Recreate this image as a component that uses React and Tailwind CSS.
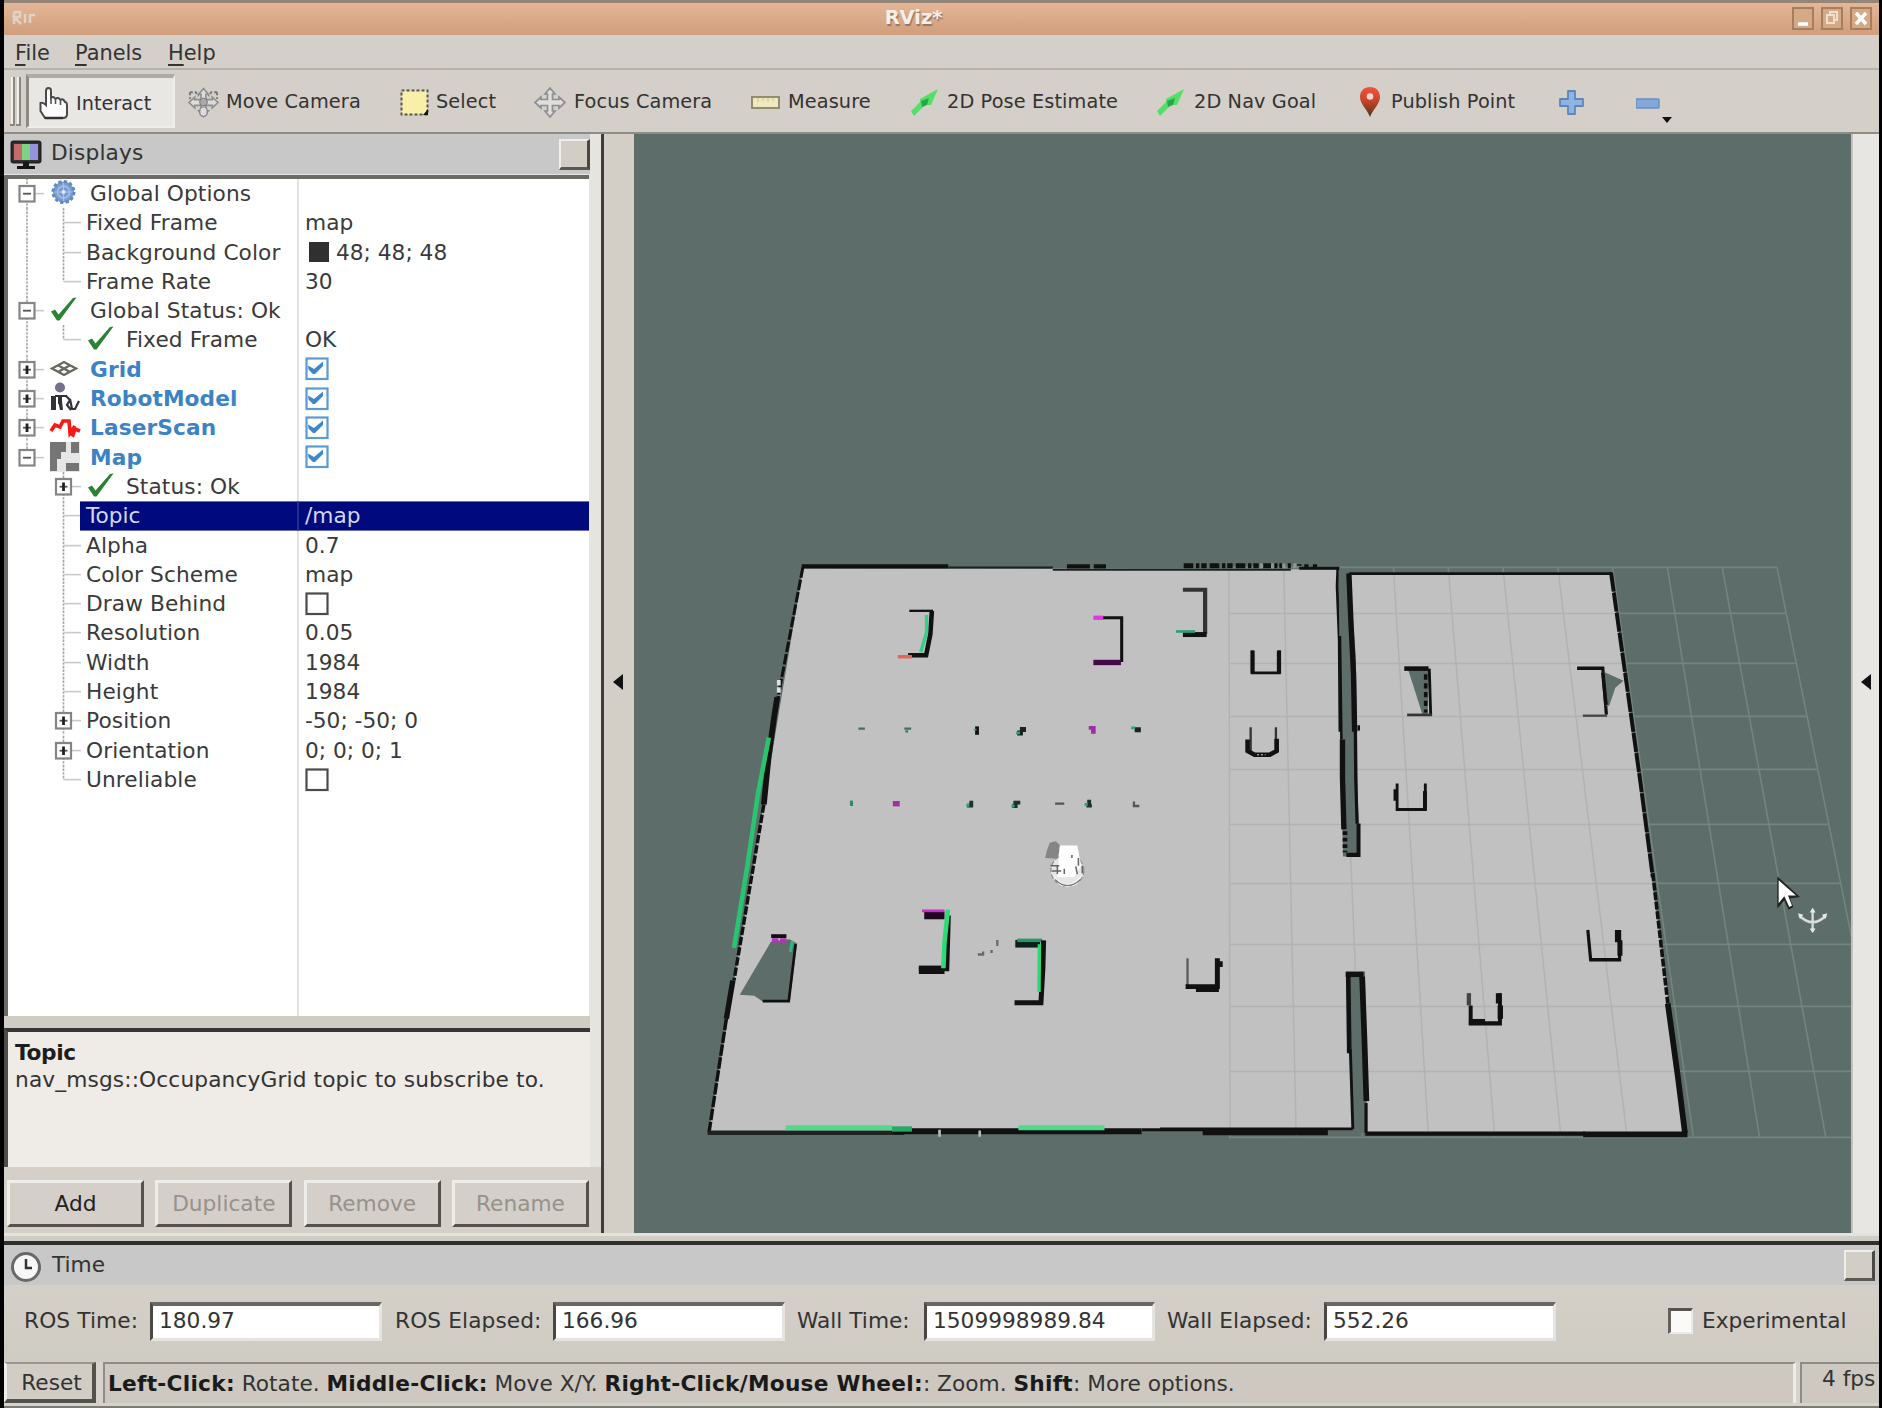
import React from "react";

const ROWS = [
  { level: 0, box: "-", icon: "gear", name: "Global Options", first: true },
  { level: 1, name: "Fixed Frame", value: "map" },
  { level: 1, name: "Background Color", value: "48; 48; 48", swatch: true },
  { level: 1, name: "Frame Rate", value: "30", last: true },
  { level: 0, box: "-", icon: "check", name: "Global Status: Ok" },
  { level: 1, icon: "check", name: "Fixed Frame", value: "OK", last: true },
  { level: 0, box: "+", icon: "grid", name: "Grid", bold: true, checked: true },
  { level: 0, box: "+", icon: "robot", name: "RobotModel", bold: true, checked: true },
  { level: 0, box: "+", icon: "laser", name: "LaserScan", bold: true, checked: true },
  { level: 0, box: "-", icon: "map", name: "Map", bold: true, checked: true, last: true },
  { level: 1, box: "+", icon: "check", name: "Status: Ok", end: true },
  { level: 1, name: "Topic", value: "/map", selected: true, end: true },
  { level: 1, name: "Alpha", value: "0.7", end: true },
  { level: 1, name: "Color Scheme", value: "map", end: true },
  { level: 1, name: "Draw Behind", unchecked: true, end: true },
  { level: 1, name: "Resolution", value: "0.05", end: true },
  { level: 1, name: "Width", value: "1984", end: true },
  { level: 1, name: "Height", value: "1984", end: true },
  { level: 1, box: "+", name: "Position", value: "-50; -50; 0", end: true },
  { level: 1, box: "+", name: "Orientation", value: "0; 0; 0; 1", end: true },
  { level: 1, name: "Unreliable", unchecked: true, end: true, last: true },
];

function RowIcon({ kind, x }) {
  return (
    <g transform={`translate(${x} 0)`}>
      {kind === "gear" && (
        <g>
          <circle cx="12.5" cy="13" r="10.5" fill="#7a9cce" stroke="#6288bd" strokeWidth="3" strokeDasharray="3.2 2.3" />
          <circle cx="12.5" cy="13" r="6" fill="none" stroke="#a9c3e8" strokeWidth="1.3" />
          <path d="M12.5 4V22M3.500 13H21.500" stroke="#a9c3e8" strokeWidth="1.200" />
          <circle cx="12.500" cy="13" r="2" fill="#dce8f8" />
        </g>
      )}
      {kind === "check" && (
        <path d="M0 15.500 L4 13.500 L7.500 18.500 L22 2 L25.500 1.500 L8.500 24.500 L6 24.500 Z" fill="#2b8232" />
      )}
      {kind === "grid" && (
        <g fill="none" stroke="#6a6660" strokeWidth="2.300">
          <path d="M1 13.500 L13 7 L25 13.500 L13 20 Z M7 10.200 L19 17 M19 10.200 L7 17" />
        </g>
      )}
      {kind === "robot" && (
        <g>
          <circle cx="9" cy="3.500" r="5" fill="#77708a" />
          <path d="M0 12h5v14h-5zM7 11h4v9h-4zM7 17h4l1 9h-3z" fill="#33303c" />
          <path d="M4 12h12M15 12l4 4-3 5 4 5M19 15l2 10h3l4-8" fill="none" stroke="#34313b" strokeWidth="2.200" />
        </g>
      )}
      {kind === "laser" && (
        <path d="M0 18 L4 12 L9 14 L12 8 L18 8 L19 20 L24 13 M19 20 L22 22 L24 16 L29 18" fill="none" stroke="#f81818" strokeWidth="3.600" />
      )}
      {kind === "map" && (
        <g>
          <rect x="-1" y="-1" width="30" height="30" fill="#e6e6e6" />
          <path d="M-1 -1H15V9H10V16H6V28H-1ZM20 -1H28V10H20ZM15 20H28V28H15Z" fill="#757575" />
        </g>
      )}
    </g>
  );
}

function Branches({ row }) {
  const cx = row.level ? 55.5 : 19;
  const w = row.level ? (row.icon ? 118 : 78) : 82;
  const dash = { stroke: "#a5a5a5", strokeWidth: 1.6, strokeDasharray: "2.4 1.2" };
  return (
    <svg width={w} height="29.3" className="shrink-0 overflow-visible">
      {!row.end && (
        <path d={`M19 ${row.first ? -1 : 0}V${row.level === 0 && row.last ? 15 : 29.3}`} {...dash} />
      )}
      {row.level === 1 && <path d={`M55.5 0V${row.last ? 15 : 29.3}`} {...dash} />}
      <path d={row.level ? "M56 14.6H73" : "M27 14.6H36"} stroke="#c9c9c9" strokeWidth="1.6" />
      {row.box && (
        <g>
          <rect x={cx - 7.5} y="7" width="15" height="15.500" fill="#fff" stroke="#858585" strokeWidth="2.200" />
          <path d={`M${cx - 4} 14.7H${cx + 4}`} stroke="#555" strokeWidth="1.8" />
          {row.box === "+" && <path d={`M${cx} 10.500V19`} stroke="#222" strokeWidth="2.800" />}
        </g>
      )}
      {row.icon && <RowIcon kind={row.icon} x={row.level ? 80 : 43} />}
    </svg>
  );
}

function CheckBox({ on }) {
  return (
    <svg width="24" height="24" className="shrink-0">
      <rect x="1.500" y="1.500" width="21" height="20.500" fill="#fff" stroke={on ? "#5b9bd5" : "#4b4b4b"} strokeWidth="2.200" />
      {on && <path d="M3 8.500 L9 12 L18 4.500 L18 9 L10 17 L8 17 L3.500 12.500 Z" fill="#3d86cc" />}
    </svg>
  );
}

function TreeRow({ row }) {
  return (
    <div className="flex h-[29.3px] leading-[29.3px] whitespace-nowrap">
      <div className="flex w-[291px] shrink-0 border-r-2 border-[#e4e4e4]">
        <Branches row={row} />
        <span
          className={
            row.selected
              ? "-ml-[6px] grow border-y border-[#6a6fb0] bg-[#000a7c] pl-[6px] leading-[27.3px] text-[#d5d7ee]"
              : row.bold
              ? "font-bold tracking-[0.1px] text-[#3c83c6]"
              : "tracking-[0.1px]"
          }
        >
          {row.name}
        </span>
      </div>
      <div
        className={
          row.selected
            ? "-ml-[2px] flex grow items-center border-y border-l-2 border-y-[#6a6fb0] border-l-[#262c8c] bg-[#000a7c] pl-[6px] text-[#d5d7ee]"
            : "flex grow items-center pl-[6px]"
        }
      >
        {row.swatch && <span className="mr-[7px] ml-1 size-5 bg-[#303030]" />}
        {row.value}
        {row.checked && <CheckBox on />}
        {row.unchecked && <CheckBox />}
      </div>
    </div>
  );
}

function DockButton() {
  return (
    <div className="h-[31px] w-[31px] border-t-2 border-r-3 border-b-3 border-l-2 border-t-[#f0eeea] border-r-[#4b4843] border-b-[#5b5852] border-l-[#f0eeea] bg-[#d2cec6]" />
  );
}

function PanelButton({ label, disabled }) {
  return (
    <div
      className={
        "flex h-[47px] w-[137px] items-center justify-center border-t-[3px] border-r-[3px] border-b-[3px] border-l-[3px] border-t-[#efede9] border-r-[#55524d] border-b-[#55524d] border-l-[#efede9] bg-[#d4cfc8] pt-px " +
        (disabled ? "text-[#96928c]" : "text-[#222]")
      }
    >
      {label}
    </div>
  );
}

function Field({ value, className }) {
  return (
    <div
      className={
        "flex h-[39px] items-center border-t-4 border-r-[3px] border-b-[3px] border-l-[3px] border-t-[#6a6763] border-r-[#e6e4df] border-b-[#e6e4df] border-l-[#4a4744] bg-white pl-[6px] text-[#333] " +
        className
      }
    >
      {value}
    </div>
  );
}

function Cross({ fill = "#dcdcdc" }) {
  return (
    <path
      d="M16 1 L21 7 H18.500 V12.500 H25 V10 L31 15.500 L25 21 V18.500 H18.500 V24 H21 L16 30 L11 24 H13.500 V18.500 H7 V21 L1 15.500 L7 10 V12.500 H13.500 V7 H11 Z"
      fill={fill}
      stroke="#8f8f8f"
      strokeWidth="1.700"
    />
  );
}

function GreenArrow() {
  return (
    <svg width="28" height="27" viewBox="0 0 28 27">
      <path d="M0 22 L9 13 L9 10 L27 0 L20 16 L14 16 L3 27 Z" fill="#54df69" />
      <path d="M10 12 L18 9 L16 16 L11 18 Z" fill="#27a848" />
    </svg>
  );
}

function Tool({ className, iconClass, icon, label }) {
  return (
    <div className={"flex shrink-0 items-center " + className}>
      <span className={"flex shrink-0 items-center pt-[2px] " + iconClass}>{icon}</span>
      <span className="pt-[2px] tracking-[0.12px]">{label}</span>
    </div>
  );
}

function Toolbar() {
  return (
    <div className="flex h-[64px] items-center border-b-2 border-[#8f8c86] bg-[#d4cfc8] text-[19.3px] whitespace-nowrap text-[#333]">
      <svg width="22" height="50" className="mt-[2px] shrink-0">
        <path d="M8 0V48M14 0V48" stroke="#f0eeea" strokeWidth="2" />
        <path d="M10 0V48H6M16 0V48H12" stroke="#8b8882" strokeWidth="2" fill="none" />
      </svg>
      <div className="mr-[2px] flex h-[54px] w-[149px] shrink-0 items-center border-t-4 border-r-2 border-b-2 border-l-[3px] border-t-[#aeaaa4] border-r-[#efedea] border-b-[#efedea] border-l-[#8d8a84] bg-[#e9e7e3] pl-[10px]">
        <svg width="30" height="33" viewBox="0 0 30 33" className="mt-[3px] mr-[7px] shrink-0">
          <path
            d="M7 17 V4 Q7 1 9.500 1 Q12 1 12 4 V11 Q14 8.500 16.500 12 Q19 9.500 21.500 13 Q24 11 26 15 Q28 15 28 19 V27 Q28 31 24 31 H6 L1.500 24 V16 Q4 15 7 18 Z"
            fill="#fbfbfb"
            stroke="#4a4a4a"
            strokeWidth="2"
          />
          <path d="M12 11V17M16.500 12V17M21.500 13V18" stroke="#555" strokeWidth="1.600" />
          <path d="M6 31H24" stroke="#333" strokeWidth="2.500" />
        </svg>
        <span className="pt-[5px]">Interact</span>
      </div>
      <Tool
        className="ml-[11px] w-[212px]"
        iconClass="w-[38px]"
        label="Move Camera"
        icon={
          <svg width="31" height="31" viewBox="0 0 32 31">
            <Cross />
            <path d="M2 5h6l3 4M30 5h-6l-3 4M2 5v7M30 5v7" fill="none" stroke="#777" strokeWidth="2" strokeDasharray="3 2" />
            <circle cx="16" cy="15" r="4" fill="#aaa" stroke="#777" />
            <ellipse cx="16" cy="25" rx="4" ry="5" fill="#ddd" stroke="#888" strokeWidth="1.500" />
          </svg>
        }
      />
      <Tool
        className="w-[134px]"
        iconClass="w-[36px]"
        label="Select"
        icon={
          <svg width="29" height="27">
            <rect x="1.500" y="1.500" width="26" height="24" fill="#f8f0a8" stroke="#555" strokeWidth="2" strokeDasharray="3 2" />
            <path d="M28 20V26H23Z" fill="#111" />
          </svg>
        }
      />
      <Tool className="w-[217px]" iconClass="w-[40px]" label="Focus Camera" icon={<svg width="32" height="31"><Cross fill="#dedede" /></svg>} />
      <Tool
        className="w-[160px]"
        iconClass="w-[37px]"
        label="Measure"
        icon={
          <svg width="29" height="13">
            <rect x="1" y="1" width="27" height="11" fill="#efe8bd" stroke="#918d72" strokeWidth="2" />
            <path d="M7 2v4M12 2v3M17 2v4M22 2v3" stroke="#d3cca0" strokeWidth="1.300" />
          </svg>
        }
      />
      <Tool className="w-[246px]" iconClass="w-[36px]" label="2D Pose Estimate" icon={<GreenArrow />} />
      <Tool className="w-[203px]" iconClass="w-[37px]" label="2D Nav Goal" icon={<GreenArrow />} />
      <Tool
        className="w-[199px]"
        iconClass="w-[31px]"
        label="Publish Point"
        icon={
          <svg width="20" height="30" viewBox="0 0 20 30">
            <defs>
              <linearGradient id="pin" x1="0" y1="0" x2="0" y2="1">
                <stop offset="0" stopColor="#f2553c" />
                <stop offset=".45" stopColor="#c8452c" />
                <stop offset="1" stopColor="#4d3716" />
              </linearGradient>
            </defs>
            <path d="M10 0C4 0 0 4 0 10C0 17 7 22 10 30C13 22 20 17 20 10C20 4 16 0 10 0Z" fill="url(#pin)" />
            <circle cx="10" cy="9.500" r="3.300" fill="#f0d5cd" />
          </svg>
        }
      />
      <svg width="25" height="25" className="mt-[2px] mr-[52px] shrink-0">
        <path d="M9 1H16V9H24V16H16V24H9V16H1V9H9Z" fill="#8fb4e3" stroke="#5f86b8" strokeWidth="1.800" strokeLinejoin="round" />
      </svg>
      <svg width="40" height="40" className="mt-[3px] shrink-0">
        <rect x="0" y="16" width="23" height="9" rx="1" fill="#82a9da" stroke="#6b8fbe" strokeWidth="1.500" />
        <path d="M26 34H36L31 40Z" fill="#111" />
      </svg>
    </div>
  );
}

function Grid() {
  const ys = [567, 613, 663, 716, 769, 824, 883, 944, 1006, 1071, 1137];
  return (
    <g>
      {ys.map((y) => (
        <path key={y} d={`M1229 ${y}H${1777 + (y - 567) * 0.2}`} />
      ))}
      {ys.map((_, k) => (
        <path key={k} d={`M${1229 + 54.8 * k} 567L${1230 + 66.2 * k} 1137`} />
      ))}
    </g>
  );
}

function Viewport() {
  return (
    <svg width="1217" height="1101" viewBox="634 133.6 1217 1101" className="shrink-0 bg-[#5d6d6a]">
      <defs>
        <clipPath id="rooms">
          <path d="M803 568L1337 569L1343 856H1360L1349 574H1611L1686 1132H1367L1365 971H1346L1353 1130L709 1131Z" />
        </clipPath>
      </defs>
      <g stroke="#73857f" strokeWidth="1.600" fill="none"><Grid /></g>
      <path d="M803 568L1337 569L1343 856H1360L1349 574H1611L1686 1132H1367L1365 971H1346L1353 1130L709 1131Z" fill="#c1c1c1" />
      <g clipPath="url(#rooms)" stroke="#b1b3b1" strokeWidth="1.500" fill="none"><Grid /></g>

      <g transform="translate(690 540) scale(.3827)" fill="none" stroke="#111" strokeWidth="8">
        <path d="M292 68H675" strokeWidth="11" />
        <path d="M675 71H948M948 77H1570" strokeWidth="5" stroke="#1c2220" />
        <path d="M985 68H1045M1055 68H1087" strokeWidth="11" />
        <path d="M1290 66H1570" strokeWidth="13" strokeDasharray="25 7 9 5 14 8" />
        <path d="M295 70L228 420" strokeWidth="8" strokeDasharray="28 5" />
        <path d="M228 410L220 460L205 570L193 690" strokeWidth="15" />
        <path d="M193 690L115 1150" strokeWidth="9" strokeDasharray="22 5" />
        <path d="M112 1150L95 1250" strokeWidth="14" />
        <path d="M95 1250L50 1545" strokeWidth="9" strokeDasharray="30 4" />
        <path d="M232 365V405" stroke="#ddd" strokeWidth="10" strokeDasharray="14 5" />
        <path d="M206 515L178 660L150 850L115 1065" stroke="#29c46f" strokeWidth="12" />
        <path d="M46 1548H560" strokeWidth="12" stroke="#1c2321" />
        <path d="M530 1544H1180M1340 1544H1570" strokeWidth="16" />
        <path d="M1180 1540H1350" strokeWidth="8" />
        <path d="M250 1535H530M858 1535H1083" stroke="#4fda8c" strokeWidth="13" />
        <path d="M528 1538H580" stroke="#28a866" strokeWidth="14" />
        <path d="M652 1540V1558M757 1542V1558" stroke="#b8b8b8" strokeWidth="7" />

        <path d="M573 184H635" strokeWidth="6" />
        <path d="M632 184L628 245L617 300H570" strokeWidth="12" />
        <path d="M618 195V240L603 292" stroke="#35cf8a" strokeWidth="9" />
        <path d="M543 304H580" stroke="#e0665a" strokeWidth="9" />
        <path d="M1065 202H1128V318" strokeWidth="8" />
        <path d="M1054 202H1080" stroke="#e038e0" strokeWidth="11" />
        <path d="M1054 319H1126" stroke="#440a48" strokeWidth="14" />
        <path d="M1288 129H1346V245" strokeWidth="11" stroke="#333" />
        <path d="M1288 246H1350" strokeWidth="13" />
        <path d="M1270 238H1320" stroke="#2c9f77" strokeWidth="7" />
        <path d="M1469 288V346H1540V288" strokeWidth="7" />
        <path d="M1470 288V348M1539 288V348" strokeWidth="11" />
        <path d="M1465 488V550M1531 488V550" strokeWidth="6" stroke="#333" />
        <path d="M1457 520V550L1475 560H1515L1533 550V518" strokeWidth="12" />
        <path d="M1482 560H1504" strokeWidth="4" stroke="#999" strokeDasharray="5 5" />

        <path d="M440 492H457M560 492H578M563 499H570" stroke="#3c7462" strokeWidth="6" />
        <path d="M750 486V508" strokeWidth="10" />
        <path d="M862 494H878M855 503H870M1162 495H1178" stroke="#17251f" strokeWidth="13" />
        <path d="M852 503H862M1153 490H1163M745 492V497" stroke="#2ca876" strokeWidth="7" />
        <path d="M1042 490H1060M1048 500H1060" stroke="#a22ca8" strokeWidth="10" />
        <path d="M422 680V694" stroke="#2b8966" strokeWidth="8" />
        <path d="M530 688H548" stroke="#a42ca6" strokeWidth="14" />
        <path d="M735 680V698M724 693H738M845 685H863M842 694H856M1043 678V698M1036 693H1050" stroke="#1a3328" strokeWidth="10" />
        <path d="M722 692H730M840 694H848M1031 690H1039" stroke="#2ca876" strokeWidth="8" />
        <path d="M954 688H978M1160 682V694H1174" stroke="#555" strokeWidth="6" />

        <path d="M932 812L940 790L955 786L968 797L960 832L928 830Z" fill="#858585" stroke="none" />
        <ellipse cx="986" cy="862" rx="43" ry="41" fill="#e6e6e6" stroke="#8a8a8a" strokeWidth="3" strokeDasharray="12 6" />
        <path d="M966 797H1012L1022 850L1004 880H960Z" fill="#fff" stroke="none" />
        <path d="M942 850H965M945 864H970M960 850V872M1015 830V850M1025 850V870M998 822V830M978 858V872M1008 852L1012 872M975 903H995" stroke="#666" strokeWidth="4" />
        <path d="M948 872Q985 926 1026 872L1012 898Q986 914 962 898Z" fill="#fff" stroke="none" />
        <path d="M954 886Q986 918 1020 886" stroke="#777" strokeWidth="3" />

        <path d="M612 980H665" strokeWidth="20" stroke="#1d0820" />
        <path d="M606 968H665" stroke="#cd2ccc" strokeWidth="7" />
        <path d="M676 980L672 1120H598" strokeWidth="11" />
        <path d="M598 1122H665" strokeWidth="22" />
        <path d="M674 965L665 1050L662 1118" stroke="#2bdc78" strokeWidth="12" />
        <path d="M850 1054H915" strokeWidth="20" stroke="#0d2018" />
        <path d="M855 1045H920" stroke="#249965" strokeWidth="9" />
        <path d="M924 1045L922 1120L917 1208H848" strokeWidth="13" />
        <path d="M913 1055L912 1180" stroke="#2bd87a" strokeWidth="9" />
        <path d="M752 1082H768M766 1074V1084M788 1070V1078M803 1044V1060" stroke="#696969" strokeWidth="6" />
        <path d="M212 1048L260 1042L280 1053L260 1205H190L168 1190L130 1187Z" fill="#5d6d6a" stroke="none" />
        <path d="M276 1055L258 1204H190" strokeWidth="7" />
        <path d="M212 1034H252" strokeWidth="10" />
        <path d="M214 1045H252" stroke="#bd2fbd" strokeWidth="11" strokeDasharray="17 4" />
        <path d="M268 1046L262 1075" stroke="#2bbb86" strokeWidth="8" />
        <path d="M1300 1092V1165" strokeWidth="6" stroke="#5b5b5b" />
        <path d="M1295 1166H1378V1092" strokeWidth="13" />
        <path d="M1322 1172H1382M1384 1100V1115" strokeWidth="16" />
      </g>

      <g transform="translate(1160 540) scale(.3571 .3827)" fill="none" stroke="#111" strokeWidth="9">
        <path d="M280 66H390" stroke="#8d9794" strokeWidth="13" strokeDasharray="9 22" />
        <path d="M390 66V62M410 62V72M434 62V72" strokeWidth="12" />
        <path d="M390 73H498L496 120L502 260L504 500" strokeWidth="8" />
        <path d="M500 78H530L548 300L552 500L556 820H520L512 760L505 500Z" fill="#5d6d6a" stroke="none" />
        <path d="M504 250L508 520" strokeWidth="7" />
        <path d="M511 520L511 620L515 755" strokeWidth="15" />
        <path d="M518 760V815" strokeWidth="13" strokeDasharray="10 7" />
        <path d="M529 86L535 220L542 350L545 500" strokeWidth="15" />
        <path d="M547 490L548 620L552 740" strokeWidth="9" />
        <path d="M553 490H560" strokeWidth="14" />
        <path d="M556 740V822H522" strokeWidth="11" />
        <path d="M530 87H1265" strokeWidth="7" />
        <path d="M1263 84L1300 330L1345 630L1380 880" strokeWidth="11" strokeDasharray="50 3" />
        <path d="M1380 870L1422 1210" strokeWidth="10" strokeDasharray="20 5" />
        <path d="M1422 1210L1450 1400L1470 1548" strokeWidth="16" />
        <path d="M575 1550H1190" strokeWidth="11" />
        <path d="M1185 1552H1477" strokeWidth="15" />
        <path d="M526 1130H570L575 1548H540Z" fill="#5d6d6a" stroke="none" />
        <path d="M520 1134H570" strokeWidth="14" />
        <path d="M527 1130L530 1340" strokeWidth="13" />
        <path d="M533 1330L540 1538" strokeWidth="8" />
        <path d="M566 1140L572 1290L578 1465" strokeWidth="16" />
        <path d="M577 1470V1548" strokeWidth="9" />
        <path d="M0 1538H540" strokeWidth="8" />
        <path d="M120 1547H470" strokeWidth="15" />

        <path d="M695 338H752L750 455H735Z" fill="#5d6d6a" stroke="none" />
        <path d="M684 335H752" strokeWidth="12" />
        <path d="M754 335L758 455" strokeWidth="8" />
        <path d="M744 350V450" strokeWidth="10" strokeDasharray="14 9" />
        <path d="M692 456H762" strokeWidth="7" stroke="#363636" />
        <path d="M1168 334H1240L1250 455" strokeWidth="9" />
        <path d="M1184 458H1252" strokeWidth="6" stroke="#444" />
        <path d="M1242 343L1298 367L1275 385L1258 432L1248 432Z" fill="#5d6d6a" stroke="none" />
        <path d="M1240 345L1249 430" strokeWidth="10" />
        <path d="M664 635V703H743V635M658 650V680" strokeWidth="8" />
        <path d="M742 655V705" strokeWidth="11" />
        <path d="M1198 1018L1206 1096H1287V1018" strokeWidth="9" />
        <path d="M1281 1018V1050M1288 1045V1085" strokeWidth="14" />
        <path d="M865 1183V1215" strokeWidth="12" stroke="#444" />
        <path d="M870 1215V1262H952V1183" strokeWidth="11" />
        <path d="M948 1183V1210M953 1215V1250" strokeWidth="15" />
        <path d="M865 1258H910" strokeWidth="15" />
      </g>

      <g transform="translate(1640 540) scale(.3333 .3827)">
        <path d="M412 878V962L433 940L446 965L460 958L450 936L480 932Z" fill="#222" />
        <path d="M416 888V948L433 930L448 958L456 954L444 928L468 928Z" fill="#fff" />
        <path d="M518 965V1022M478 980Q518 1015 558 980" stroke="#d8dcda" strokeWidth="7" fill="none" />
        <path d="M509 972L518 960L527 972ZM509 1014L518 1026L527 1014ZM474 974L490 978L480 990ZM562 974L546 978L556 990Z" fill="#e6e8e7" />
      </g>
    </svg>
  );
}

function Displays() {
  return (
    <div className="flex h-full w-[600px] shrink-0 flex-col border-r-[3px] border-[#3f3d3a] bg-[#e6e4df]">
      <div className="flex h-[40px] w-[586px] items-center bg-[#c8c8c8] pl-[6px] text-[#333]">
        <svg width="32" height="31" viewBox="0 0 32 31" className="mt-[3px] mr-[9px]">
          <rect x="1.500" y="1.500" width="29" height="21" rx="2" fill="#333" stroke="#222" strokeWidth="2" />
          <path d="M4 4H12V20H4Z" fill="#c46c6c" />
          <path d="M12 4H20V20H12Z" fill="#7fd184" />
          <path d="M20 4H28V20H20Z" fill="#9494dc" />
          <path d="M13 22H19V26H25V29H7V26H13Z" fill="#161616" />
        </svg>
        <span className="grow pb-px tracking-[0.15px]">Displays</span>
        <DockButton />
      </div>
      <div className="mt-px h-[841px] w-[585px] overflow-hidden border-t-4 border-l-4 border-t-[#6c6a67] border-l-[#6c6a67] bg-white text-[#3a3a3a]">
        {ROWS.map((row, i) => (
          <TreeRow key={i} row={row} />
        ))}
        <div className="h-[300px] w-[291px] border-r-2 border-[#e4e4e4]" />
      </div>
      <div className="h-[12px] w-[586px] bg-[#cfccc4]" />
      <div className="h-[139px] w-[586px] border-t-4 border-l-4 border-t-[#373634] border-l-[#4f4d4a] bg-[#efebe7] pt-[7px] pl-[7px] leading-[27px] text-[#333]">
        <div className="font-bold tracking-[-0.4px] text-[#1d1d1d]">Topic</div>
        <div className="tracking-[0.13px] whitespace-nowrap">nav_msgs::OccupancyGrid topic to subscribe to.</div>
      </div>
      <div className="flex grow justify-between bg-[#d4cfc8] pt-[13px] pr-[12px] pl-[3px]">
        <PanelButton label="Add" />
        <PanelButton label="Duplicate" disabled />
        <PanelButton label="Remove" disabled />
        <PanelButton label="Rename" disabled />
      </div>
    </div>
  );
}

function WindowButton({ children }) {
  return (
    <svg width="22" height="23" className="shrink-0">
      <rect x="1" y="1" width="20" height="21" fill="#d6a985" stroke="#a37e60" strokeWidth="2" />
      {children}
    </svg>
  );
}

export default function App() {
  return (
    <div className="flex h-[1408px] w-[1882px] flex-col overflow-hidden border-r-[3px] border-l-4 border-black bg-[#d4cfc8] font-['DejaVu_Sans',sans-serif] text-[21.7px]">
      <div className="flex h-[35px] shrink-0 items-center border-t-[3px] border-[#94857a] bg-linear-to-b from-[#e5b797] to-[#cf9e7b] pr-[7px] pb-[2px] pl-[8px]">
        <svg width="26" height="16" className="shrink-0">
          <path d="M2 2V14M2 2H8V7H2L9 14M13 4V13M18 4V13M18 5H23" stroke="#e0d2c5" strokeWidth="2.500" fill="none" />
        </svg>
        <span className="w-[1751px] shrink-0 text-center text-[19.4px] font-bold text-[#f6efe9] [text-shadow:1px_2px_1px_#967660]">RViz*</span>
        <div className="ml-auto flex gap-[7px]">
          <WindowButton><path d="M6 17H16" stroke="#fff" strokeWidth="3.500" /></WindowButton>
          <WindowButton><path d="M6 8H13V16H6ZM9 8V5H16V13H13" stroke="#f0dfd1" strokeWidth="2" fill="none" /></WindowButton>
          <WindowButton><path d="M6 6L16 17M16 6L6 17" stroke="#fff" strokeWidth="3.500" /></WindowButton>
        </div>
      </div>
      <div className="flex h-[35px] shrink-0 items-center border-b-2 border-[#b6b2ac] pt-[4px] pl-[11px] text-[20.9px] text-[#333]">
        <span className="w-[60px]"><u className="underline-offset-4">F</u>ile</span>
        <span className="w-[93px]"><u className="underline-offset-4">P</u>anels</span>
        <span><u className="underline-offset-4">H</u>elp</span>
      </div>
      <Toolbar />
      <div className="flex h-[1099px] shrink-0">
        <Displays />
        <div className="flex w-[30px] shrink-0 items-center justify-center bg-[#d3cfc7] pr-[2px] pb-[4px]">
          <svg width="10" height="16"><path d="M10 0V16L0 8Z" fill="#111" /></svg>
        </div>
        <Viewport />
        <div className="flex grow items-center border-l-2 border-[#c2c1bc] bg-[#e8e6e2] pb-[3px] pl-[8px]">
          <svg width="10" height="16"><path d="M10 0V16L0 8Z" fill="#111" /></svg>
        </div>
      </div>
      <div className="h-[12px] shrink-0 border-t-[3px] border-b-4 border-t-[#e4e2dd] border-b-[#2f2f2c] bg-[#cfcdc5]" />
      <div className="flex h-[40px] shrink-0 items-center bg-[#c8c8c8] pr-[4px] pl-[6px] text-[#333]">
        <svg width="32" height="32" className="mt-[3px] mr-[10px]">
          <circle cx="16" cy="16" r="13.500" fill="#f7f7f7" stroke="#686868" strokeWidth="3" />
          <path d="M16 8V17H22" stroke="#333" strokeWidth="2.500" fill="none" />
        </svg>
        <span className="grow">Time</span>
        <DockButton />
      </div>
      <div className="flex h-[77px] shrink-0 items-center bg-linear-to-b from-[#d4cfc8] to-[#cfccc3] pb-[5px] pl-[20px] whitespace-nowrap text-[#333]">
        <span className="w-[126px] pt-px tracking-[0.1px]">ROS Time:</span>
        <Field className="w-[232px]" value="180.97" />
        <span className="w-[171px] pt-px pl-[13px] tracking-[0.1px]">ROS Elapsed:</span>
        <Field className="w-[232px]" value="166.96" />
        <span className="w-[139px] pt-px pl-[12px]">Wall Time:</span>
        <Field className="w-[231px]" value="1509998989.84" />
        <span className="w-[169px] pt-px pl-[12px]">Wall Elapsed:</span>
        <Field className="w-[232px]" value="552.26" />
        <div className="ml-[112px] h-[26px] w-[25px] border-t-[3px] border-r-2 border-b-2 border-l-[3px] border-t-[#55524f] border-r-[#eceae6] border-b-[#eceae6] border-l-[#65625e] bg-[#fcfaf7]" />
        <span className="pt-px pl-[9px]">Experimental</span>
      </div>
      <div className="flex h-[44px] shrink-0 bg-[#d6d3cc] whitespace-nowrap text-[#333]">
        <div className="flex h-[41px] w-[92px] shrink-0 items-center justify-center border-t-2 border-r-4 border-b-4 border-l-[3px] border-t-[#9a9791] border-r-[#55524d] border-b-[#55524d] border-l-[#efede9] bg-[#d1cdc5] pt-[3px]">
          <span className="pl-[4px]">Reset</span>
        </div>
        <div className="ml-[7px] flex h-[41px] w-[1693px] shrink-0 items-center border-t-2 border-r-[3px] border-l-2 border-t-[#8f8c86] border-r-[#eeece8] border-l-[#8f8c86] bg-[#cdc8c0] pt-px pl-[3px]">
          <span className="whitespace-pre"><b className="tracking-[0.25px] text-[#1a1a1a]">Left-Click:</b> Rotate. <b className="tracking-[0.25px] text-[#1a1a1a]">Middle-Click:</b> Move X/Y. <b className="tracking-[0.25px] text-[#1a1a1a]">Right-Click/Mouse Wheel:</b>: Zoom. <b className="tracking-[0.25px] text-[#1a1a1a]">Shift</b>: More options.</span>
        </div>
        <div className="ml-[4px] h-[41px] grow border-t-2 border-l-2 border-[#8f8c86] bg-[#cdc8c0] pl-[20px] leading-[29px]">4 fps</div>
      </div>
      <div className="h-[2px] shrink-0 bg-[#7b7b76]" />
    </div>
  );
}
